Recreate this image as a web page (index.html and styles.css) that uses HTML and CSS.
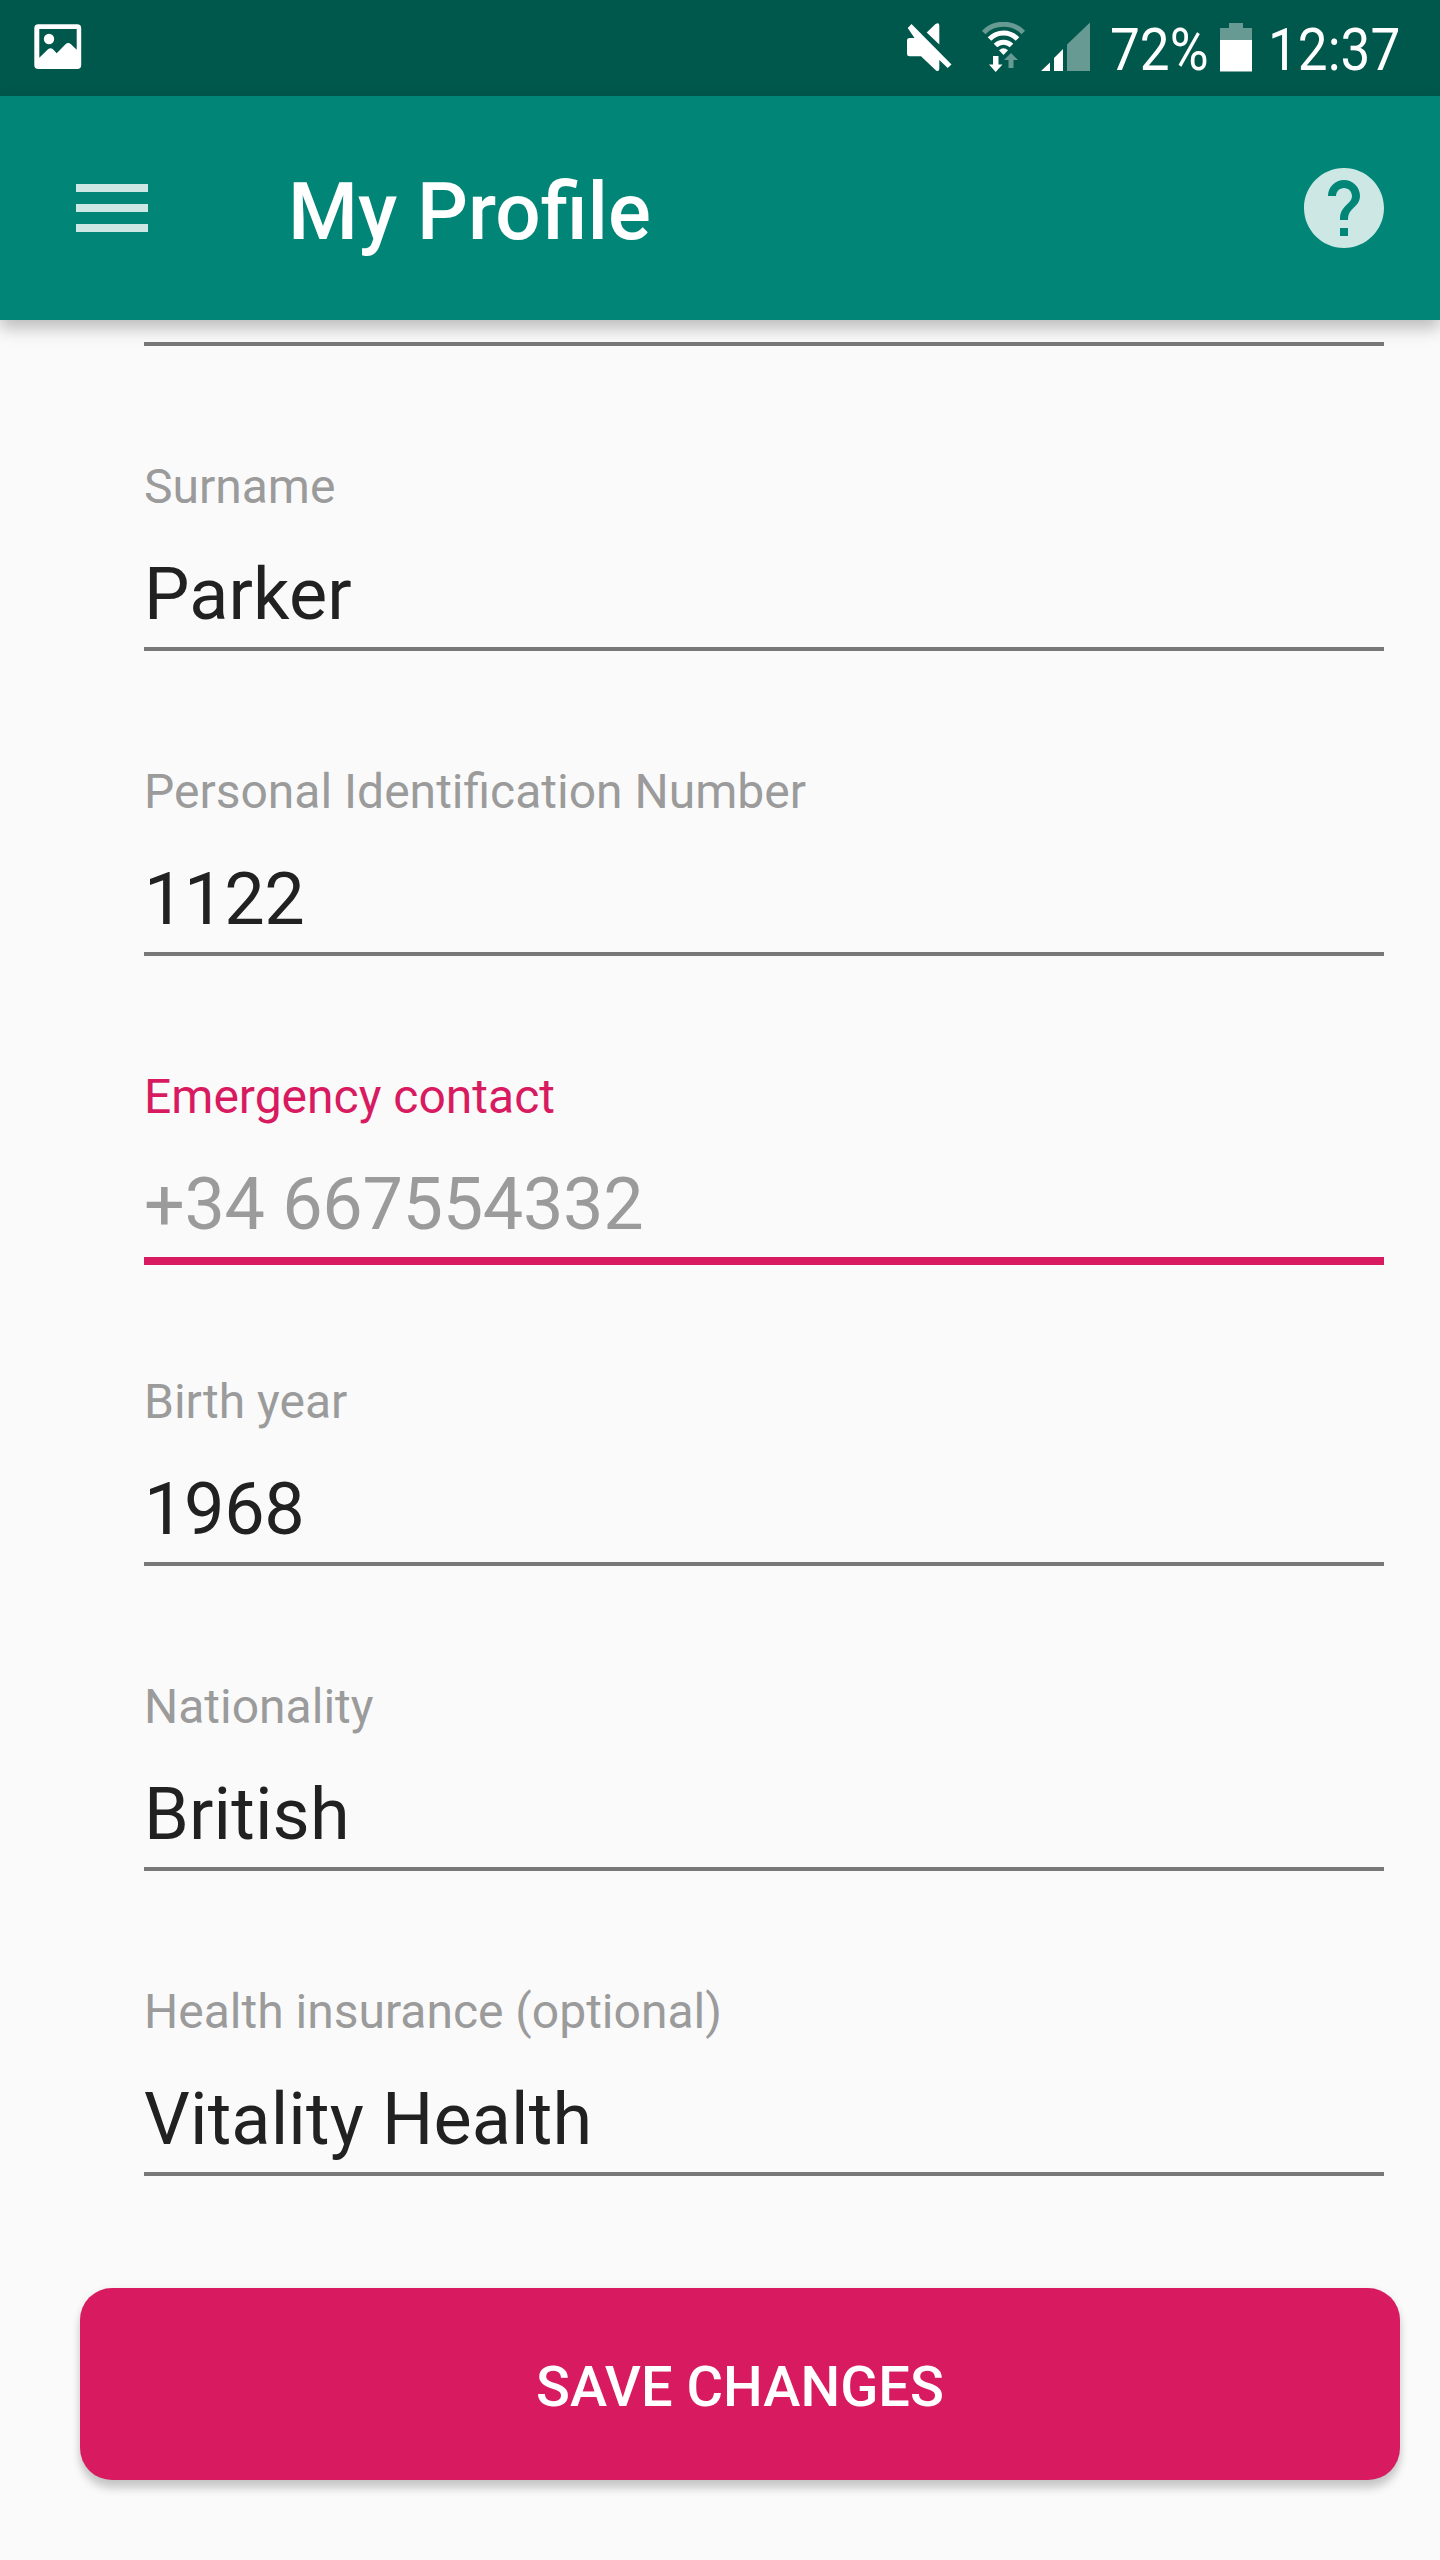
FILE: index.html
```html
<!DOCTYPE html>
<html lang="en">
<head>
<meta charset="utf-8">
<title>My Profile</title>
<link rel="stylesheet" href="styles.css">
</head>
<body>
<div class="status-bar">
  <svg class="icon-photo" width="48" height="46" viewBox="0 0 48 46">
    <path fill="#fff" fill-rule="evenodd" d="M4.300 .2H43.200a4 4 0 0 1 4 4V41a4 4 0 0 1-4 4H4.300a4 4 0 0 1-4-4V4.200a4 4 0 0 1 4-4ZM5.300 5V33.700L14 25.200Q16.500 23.500 19 25.200L22.700 29.200L31.500 20.200Q34.200 18 37 20.200L42.700 25.700V5Z"/>
    <circle cx="15" cy="15" r="5.200" fill="#fff"/>
  </svg>
  <div class="status-right">
    <svg class="icon-mute" width="46" height="49" viewBox="907 23 46 49">
      <path fill="#fff" d="M907 40.500Q907 38 909.500 38H914.500L907.700 28L911.500 24L951.500 64.500L947.700 68L939.300 60V69Q939 72 936 70.500L921 56.300H909.500Q907 56.300 907 54ZM926.700 32.500L935.500 24Q939.300 22 939.300 25.500V44.500Z"/>
    </svg>
    <svg class="icon-wifi" width="44" height="50" viewBox="982 22 44 50">
      <g fill="none" stroke="#fff" stroke-width="5">
        <path stroke="#669a93" d="M983.700 32.500C994 21.500 1013 21.500 1023.300 32.500"/>
        <path d="M989.500 39C997.500 31 1009.500 31 1017.500 39"/>
        <path d="M995.500 45.500C1000 41 1007 41 1011.500 45.500"/>
      </g>
      <path fill="#fff" d="M999 50.300Q1003.500 46 1008 50.300L1003.500 55ZM993 56H998.500V64.500H1002.500L995.700 72L989 64.500H993Z"/>
      <path fill="#669a93" d="M1008.500 68V60H1004L1011 53L1018 60H1013.500V68Z"/>
    </svg>
    <svg class="icon-signal" width="50" height="49" viewBox="1040 22 50 49">
      <path fill="#fff" d="M1041 71L1050 62.500V71ZM1054 58L1063 49V71H1054Z"/>
      <path fill="#669a93" d="M1067 44.500L1090 22.500V71H1067Z"/>
    </svg>
    <span class="battery-level"><span class="condensed">72%</span></span>
    <svg class="icon-battery" width="32" height="49" viewBox="0 0 32 49">
      <path fill="#669a93" d="M9 0H23V5H32V17H0V5H9Z"/>
      <path fill="#fff" d="M0 17H32V48.500H0Z"/>
    </svg>
    <span class="clock"><span class="condensed">12:37</span></span>
  </div>
</div>
<header class="app-bar">
  <svg width="96" height="96" viewBox="0 0 24 24" fill="#fff" fill-opacity=".8"><path d="M3 18h18v-2H3v2zm0-5h18v-2H3v2zm0-7v2h18V6H3z"/></svg>
  <h1 class="title">My Profile</h1>
  <svg width="96" height="96" viewBox="0 0 24 24" fill="#fff" fill-opacity=".8"><path d="M12 2C6.480 2 2 6.480 2 12s4.480 10 10 10 10-4.480 10-10S17.520 2 12 2zm1 17h-2v-2h2v2zm2.070-7.750l-.9.920C13.450 12.900 13 13.500 13 15h-2v-.5c0-1.100.45-2.100 1.170-2.830l1.240-1.260c.37-.36.59-.86.59-1.410 0-1.100-.9-2-2-2s-2 .9-2 2H8c0-2.210 1.790-4 4-4s4 1.790 4 4c0 .88-.36 1.680-.93 2.250z"/></svg>
</header>
<main class="form">
  <div class="field-end"></div>
  <div class="field"><span class="label">Surname</span><span class="value">Parker</span></div>
  <div class="field"><span class="label">Personal Identification Number</span><span class="value numeric">1122</span></div>
  <div class="field focused"><span class="label">Emergency contact</span><span class="value numeric">+34 667554332</span></div>
  <div class="field"><span class="label">Birth year</span><span class="value numeric">1968</span></div>
  <div class="field"><span class="label">Nationality</span><span class="value">British</span></div>
  <div class="field"><span class="label">Health insurance (optional)</span><span class="value">Vitality Health</span></div>
  <button class="save" type="button">SAVE CHANGES</button>
</main>
</body>
</html>
```
FILE: styles.css
```css
* { box-sizing: border-box; }
body {
  margin: 0;
  width: 1440px;
  height: 2560px;
  overflow: hidden;
  background: #fafafa;
  font-family: Roboto, "Liberation Sans", sans-serif;
  color: #212121;
}
svg { display: block; flex: none; }
.status-bar {
  display: flex;
  justify-content: space-between;
  height: 96px;
  padding: 0 38px 0 34px;
  background: #00574b;
  color: #fff;
}
.icon-photo { margin-top: 24px; }
.status-right { display: flex; }
.icon-mute { margin: 23px 29px 0 0; }
.icon-wifi { margin: 22px 14px 0 0; }
.icon-signal { margin: 22px 20px 0 0; }
.icon-battery { margin: 23px 16px 0 0; }
.battery-level, .clock {
  margin-top: 15px;
  font-size: 60px;
  line-height: 70px;
  white-space: nowrap;
}
.battery-level { width: 110px; }
.clock { width: 134px; }
.condensed {
  display: inline-block;
  transform: scaleX(.885);
  transform-origin: 0 0;
}
.app-bar {
  position: relative;
  display: flex;
  align-items: center;
  height: 224px;
  padding: 0 48px 0 64px;
  background: #008577;
  color: #fff;
  box-shadow: 0 8px 16px rgba(0, 0, 0, .26);
}
.title {
  flex: 1;
  margin: 8px 0 0 128px;
  font-size: 80px;
  line-height: 94px;
  font-weight: 500;
}
.form { display: flex; flex-direction: column; padding: 22px 40px 0 80px; }
.field-end, .field { margin: 0 16px 0 64px; border-bottom: 4px solid #787878; }
.field-end { height: 4px; }
.field {
  display: flex;
  flex-direction: column;
  height: 305px;
  padding-top: 113px;
}
.label { font-size: 48px; line-height: 56px; color: #9b9b9b; }
.value { margin-top: 38px; font-size: 72px; line-height: 84px; letter-spacing: .15px; }
.numeric { letter-spacing: -.35px; }
.focused { height: 309px; margin-bottom: -4px; border-bottom: 8px solid #d81b60; }
.focused .label { color: #d81b60; }
.focused .value { color: #9b9b9b; }
.save {
  height: 192px;
  margin-top: 112px;
  padding: 6px 0 0;
  border: 0;
  border-radius: 32px;
  background: #d81b60;
  color: #fff;
  font: 500 56px/66px Roboto, "Liberation Sans", sans-serif;
  box-shadow: 0 9px 8px rgba(0, 0, 0, .17), 0 2px 8px rgba(0, 0, 0, .08);
}
```
